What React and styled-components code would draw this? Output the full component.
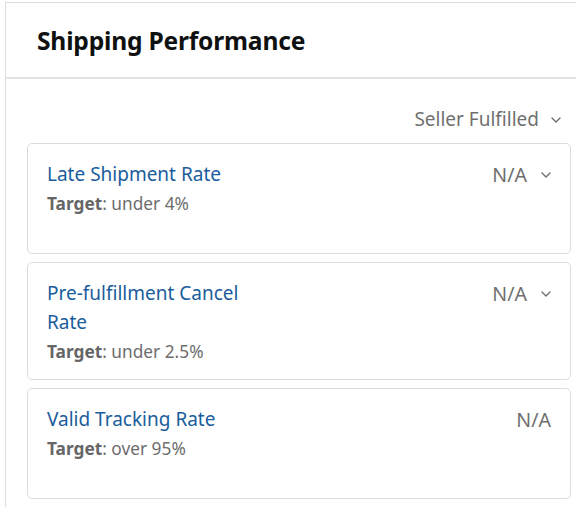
import React from "react";
import styled, { createGlobalStyle } from "styled-components";

const Global = createGlobalStyle`
  html, body { margin: 0; padding: 0; background: #ffffff; }
  body { font-family: "Noto Sans", "Liberation Sans", sans-serif; overflow: hidden; }
`;

const Panel = styled.section`
  margin: 2px 0 0 5px;
  width: 586px;
  border: 1px solid #dddddd;
  border-bottom: none;
  background: #fff;
`;

const Header = styled.header`
  height: 74px;
  display: flex;
  align-items: center;
  padding-left: 31px;
  border-bottom: 2px solid #e3e3e3;
`;

const Title = styled.h2`
  margin: 0;
  font-size: 24.6px;
  font-weight: 700;
  color: #0f1111;
  letter-spacing: -0.2px;
`;

const Body = styled.div`
  padding: 0 21px 20px 21px;
`;

const FilterRow = styled.div`
  height: 64px;
  box-sizing: border-box;
  padding: 27px 10px 0 0;
  display: flex;
  align-items: flex-start;
  justify-content: flex-end;
  gap: 12px;
  color: #6f6f6f;
  font-size: 19px;
  line-height: 26px;
  & > svg { margin-top: 11px; }
`;

const Cards = styled.div`
  display: flex;
  flex-direction: column;
  gap: 8px;
`;

const Card = styled.div`
  min-height: 111px;
  box-sizing: border-box;
  border: 1px solid #dcdcdc;
  border-radius: 5px;
  padding: 16px 19px 13px 19px;
  display: flex;
  justify-content: space-between;
  align-items: flex-start;
`;

const Info = styled.div`
  display: flex;
  flex-direction: column;
`;

const MetricName = styled.a`
  color: #1a5d9c;
  font-size: 19px;
  line-height: 29px;
  text-decoration: none;
  max-width: ${(p) => (p.$narrow ? "200px" : "none")};
`;

const Target = styled.div`
  color: #6d6d6d;
  font-size: 17.3px;
  line-height: 29px;
  b { font-weight: 700; color: #666; }
`;

const Value = styled.div`
  display: flex;
  align-items: center;
  gap: 14px;
  height: 29px;
  color: #6f6f6f;
  font-size: 19.6px;
`;

const Chevron = () => (
  <svg width="10" height="6" viewBox="0 0 10 6" fill="none">
    <path d="M1 1l4 4 4-4" stroke="#6f6f6f" strokeWidth="1.4" strokeLinecap="round" strokeLinejoin="round" />
  </svg>
);

const metrics = [
  { name: "Late Shipment Rate", target: "under 4%", chevron: true },
  { name: "Pre-fulfillment Cancel Rate", target: "under 2.5%", chevron: true, narrow: true },
  { name: "Valid Tracking Rate", target: "over 95%", chevron: false },
];

export default function App() {
  return (
    <>
      <Global />
      <Panel>
        <Header>
          <Title>Shipping Performance</Title>
        </Header>
        <Body>
          <FilterRow>
            <span>Seller Fulfilled</span>
            <Chevron />
          </FilterRow>
          <Cards>
            {metrics.map((m) => (
              <Card key={m.name}>
                <Info>
                  <MetricName $narrow={m.narrow}>{m.name}</MetricName>
                  <Target>
                    <b>Target</b>: {m.target}
                  </Target>
                </Info>
                <Value>
                  <span>N/A</span>
                  {m.chevron && <Chevron />}
                </Value>
              </Card>
            ))}
          </Cards>
        </Body>
      </Panel>
    </>
  );
}
